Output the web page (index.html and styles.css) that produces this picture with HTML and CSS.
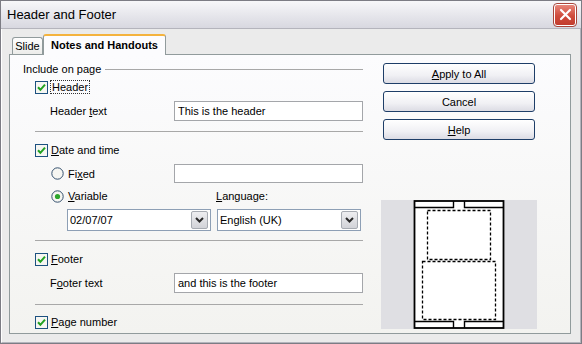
FILE: index.html
```html
<!DOCTYPE html>
<html lang="en">
<head>
    <meta charset="UTF-8">
    <title>Header and Footer</title>
    <link rel="stylesheet" href="styles.css">
</head>
<body>

    <div class="window">
        <div class="titlebar">
            <span class="title">Header and Footer</span>
            <span class="close">
                <svg width="13" height="13" viewBox="0 0 13 13"><path d="M2 2 L11 11 M11 2 L2 11" stroke="#fff" stroke-width="2.2" stroke-linecap="round"/></svg>
            </span>
        </div>

        <div class="frame">
            <div class="tabs">
                <div class="tab">Slide</div>
                <div class="tab active">Notes and Handouts</div>
            </div>

            <div class="panel">
                <div class="options">
                    <div class="legend"><span>Include on page</span><span class="legend-line"></span></div>

                    <div class="row check-row mt-4">
                        <svg class="box" width="13" height="13" viewBox="0 0 13 13"><rect x="0.5" y="0.5" width="12" height="12" fill="#f6f6f2" stroke="#1c5180"/><path d="M3 6.3 L5.4 8.8 L10 3.6" stroke="#21a121" stroke-width="2" fill="none"/></svg>
                        <span class="focus">Header</span>
                    </div>
                    <div class="field text-row mt-7">
                        <span class="field-label">Header <u>t</u>ext</span>
                        <span class="input">This is the header</span>
                    </div>

                    <div class="sep mt-10"></div>

                    <div class="row check-row mt-11">
                        <svg class="box" width="13" height="13" viewBox="0 0 13 13"><rect x="0.5" y="0.5" width="12" height="12" fill="#f6f6f2" stroke="#1c5180"/><path d="M3 6.3 L5.4 8.8 L10 3.6" stroke="#21a121" stroke-width="2" fill="none"/></svg>
                        <span><u>D</u>ate and time</span>
                    </div>
                    <div class="fixed-row mt-7">
                        <span class="radio-label">
                            <svg class="radio" width="13" height="13" viewBox="0 0 13 13"><circle cx="6.5" cy="6.5" r="5.7" fill="#f6f6f2" stroke="#34506e"/></svg>
                            <span>Fi<u>x</u>ed</span>
                        </span>
                        <span class="input small"></span>
                    </div>
                    <div class="row variable-row mt-6">
                        <span class="radio-label">
                            <svg class="radio" width="13" height="13" viewBox="0 0 13 13"><circle cx="6.5" cy="6.5" r="5.7" fill="#f6f6f2" stroke="#34506e"/><circle cx="6.5" cy="6.5" r="2.6" fill="#2da62d"/></svg>
                            <span><u>V</u>ariable</span>
                        </span>
                        <span><u>L</u>anguage:</span>
                    </div>
                    <div class="select-row mt-6">
                        <div class="select">
                            <span>02/07/07</span>
                            <span class="drop"><svg width="9" height="6" viewBox="0 0 9 6"><path d="M1 1 L4.5 4.5 L8 1" stroke="#2a2a2a" stroke-width="2" fill="none"/></svg></span>
                        </div>
                        <div class="select">
                            <span>English (UK)</span>
                            <span class="drop"><svg width="9" height="6" viewBox="0 0 9 6"><path d="M1 1 L4.5 4.5 L8 1" stroke="#2a2a2a" stroke-width="2" fill="none"/></svg></span>
                        </div>
                    </div>

                    <div class="sep mt-9"></div>

                    <div class="row check-row mt-11">
                        <svg class="box" width="13" height="13" viewBox="0 0 13 13"><rect x="0.5" y="0.5" width="12" height="12" fill="#f6f6f2" stroke="#1c5180"/><path d="M3 6.3 L5.4 8.8 L10 3.6" stroke="#21a121" stroke-width="2" fill="none"/></svg>
                        <span><u>F</u>ooter</span>
                    </div>
                    <div class="field text-row mt-7">
                        <span class="field-label">F<u>o</u>oter text</span>
                        <span class="input">and this is the footer</span>
                    </div>

                    <div class="sep mt-11"></div>

                    <div class="row check-row mt-10">
                        <svg class="box" width="13" height="13" viewBox="0 0 13 13"><rect x="0.5" y="0.5" width="12" height="12" fill="#f6f6f2" stroke="#1c5180"/><path d="M3 6.3 L5.4 8.8 L10 3.6" stroke="#21a121" stroke-width="2" fill="none"/></svg>
                        <span><u>P</u>age number</span>
                    </div>
                </div>

                <div class="side">
                    <button class="btn"><u>A</u>pply to All</button>
                    <button class="btn">Cancel</button>
                    <button class="btn"><u>H</u>elp</button>

                    <div class="preview">
                        <svg width="156" height="129" viewBox="0 0 156 129">
                            <rect x="33.5" y="1" width="89" height="127" fill="#fff" stroke="#000" stroke-width="1.8"/>
                            <path d="M33.5 7.5 H72.5 V1 M83.5 1 V7.5 H122.5" stroke="#000" stroke-width="1.4" fill="none"/>
                            <path d="M33.5 121.5 H72.5 V128 M83.5 128 V121.5 H122.5" stroke="#000" stroke-width="1.4" fill="none"/>
                            <rect x="46.5" y="10.5" width="63" height="49" fill="none" stroke="#000" stroke-width="1.3" stroke-dasharray="3 2"/>
                            <rect x="41.5" y="61.5" width="73" height="58" fill="none" stroke="#000" stroke-width="1.3" stroke-dasharray="3 2"/>
                        </svg>
                    </div>
                </div>
            </div>
        </div>
    </div>

</body>
</html>
```

FILE: styles.css
```css
body {
    margin: 0;
    font-family: "Liberation Sans", Arial, sans-serif;
    font-size: 11px;
    color: #000;
}

.window {
    width: 582px;
    height: 344px;
    box-sizing: border-box;
    border: 1px solid #7c7c84;
    background-color: #ebebeb;
}

.titlebar {
    height: 27px;
    display: flex;
    align-items: center;
    justify-content: space-between;
    padding: 0 4px 0 6px;
    border-bottom: 1px solid #b4b4bc;
    background: linear-gradient(#f7f7f9, #e4e4ea 60%, #d8d8e0);
}

.title {
    font-size: 13px;
}

.close {
    width: 20px;
    height: 20px;
    display: flex;
    align-items: center;
    justify-content: center;
    border: 1px solid #fff;
    outline: 1px solid #a8463c;
    border-radius: 3px;
    background: linear-gradient(#e8867a, #cf4b3c 55%, #c23c2e);
    margin-right: 1px;
}

.frame {
    height: 314px;
    box-sizing: border-box;
    padding: 4px 9px 0 7px;
    border-left: 1px solid #fff;
    border-right: 1px solid #b4b4bc;
    border-bottom: 1px solid #b4b4bc;
}

.tabs {
    display: flex;
    align-items: flex-end;
    height: 21px;
    padding-left: 3px;
}

.tab {
    height: 16px;
    width: 29px;
    line-height: 16px;
    text-align: center;
    border: 1px solid #919b9c;
    border-bottom: none;
    border-radius: 3px 3px 0 0;
    background: linear-gradient(#fefefe, #ececea);
}

.tab.active {
    width: 121px;
    height: 19px;
    line-height: 18px;
    margin-bottom: -1px;
    position: relative;
    z-index: 1;
    font-weight: bold;
    border-top: 2px solid #f4b33e;
    background: #fcfcfe;
}

.panel {
    height: 280px;
    box-sizing: border-box;
    display: grid;
    grid-template-columns: 340px 156px;
    align-items: start;
    column-gap: 18px;
    padding: 7px 0 0 13px;
    border: 1px solid #919b9c;
    background: linear-gradient(#fcfcfe, #f3f3f0);
}

.legend {
    height: 14px;
    display: flex;
    align-items: center;
}

.legend-line {
    flex: 1;
    height: 1px;
    margin-left: 4px;
    background-color: #a8a8a8;
}

.row {
    height: 14px;
    display: flex;
    align-items: center;
}

.check-row {
    padding-left: 12px;
    gap: 3px;
}

.focus {
    padding: 0 1px;
    outline: 1px dotted #333;
}

.text-row {
    height: 20px;
    display: flex;
    align-items: center;
    padding-left: 27px;
}

.field-label {
    width: 124px;
}

.input {
    width: 189px;
    height: 20px;
    box-sizing: border-box;
    line-height: 18px;
    padding-left: 3px;
    border: 1px solid #a4a6aa;
    background-color: #fff;
}

.input.small {
    height: 19px;
}

.sep {
    height: 1px;
    margin-left: 12px;
    background-color: #a8a8a8;
}

.fixed-row {
    height: 19px;
    display: flex;
    align-items: center;
    padding-left: 28px;
}

.radio-label {
    display: flex;
    align-items: center;
    gap: 4px;
}

.fixed-row .radio-label {
    width: 123px;
}

.variable-row {
    padding-left: 28px;
}

.variable-row .radio-label {
    width: 165px;
}

.select-row {
    display: flex;
    gap: 6px;
    padding-left: 44px;
}

.select {
    width: 144px;
    height: 22px;
    box-sizing: border-box;
    display: flex;
    align-items: center;
    justify-content: space-between;
    padding: 0 2px 0 2px;
    border: 1px solid #8d9fb5;
    background-color: #fff;
}

.drop {
    width: 15px;
    height: 16px;
    display: flex;
    align-items: center;
    justify-content: center;
    border: 1px solid #a7abb2;
    border-radius: 2px;
    background: linear-gradient(#eeeef0, #d2d3d8);
}

.mt-4 { margin-top: 4px; }
.mt-6 { margin-top: 6px; }
.mt-7 { margin-top: 7px; }
.mt-9 { margin-top: 9px; }
.mt-10 { margin-top: 10px; }
.mt-11 { margin-top: 11px; }

.side {
    display: flex;
    flex-direction: column;
    gap: 7px;
}

.btn {
    height: 21px;
    margin: 1px 2px 0;
    padding: 0;
    font-family: inherit;
    font-size: 11px;
    color: #000;
    border: 1px solid #1e3e68;
    border-radius: 3px;
    background: linear-gradient(#ffffff, #f0f0f4 60%, #dcdce4);
}

.btn + .btn {
    margin-top: 0;
}

.preview {
    margin-top: 53px;
    height: 129px;
    background-color: #dfdfe3;
}

.preview svg {
    display: block;
}
```
